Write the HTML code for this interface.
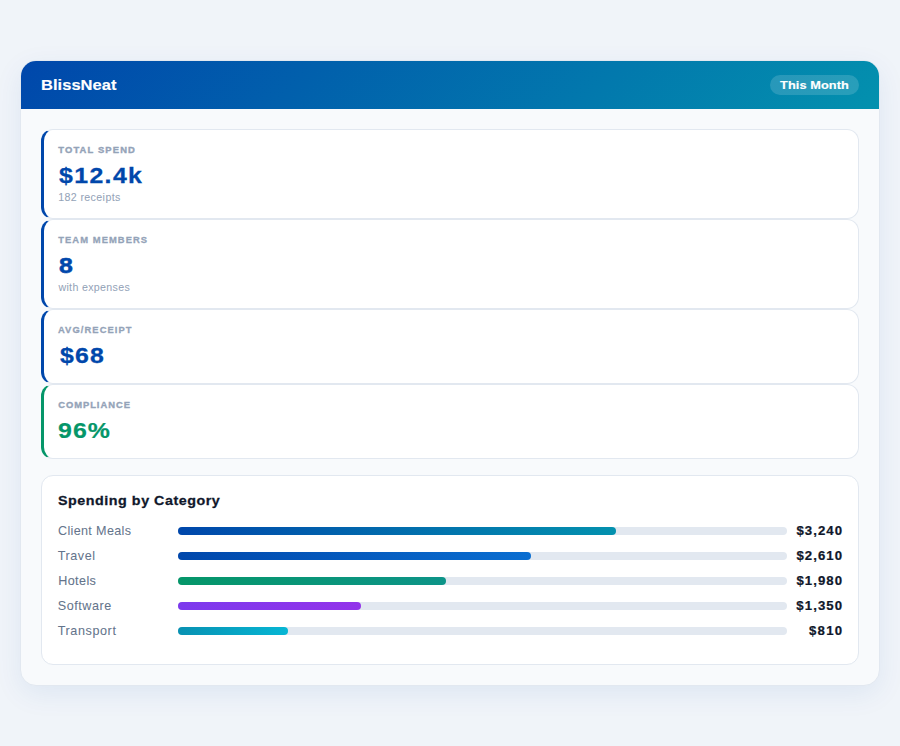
<!DOCTYPE html>
<html lang="en">
<head>
<meta charset="utf-8">
<title>BlissNeat</title>
<style>
html,body{margin:0;padding:0}
body{width:900px;height:746px;position:relative;overflow:hidden;background:#f0f4f9;font-family:"Liberation Sans",sans-serif;}
.card{position:absolute;left:20px;top:60px;width:860px;height:626px;box-sizing:border-box;border:1px solid #e2e8f0;background:#f8fafc;border-radius:16px;box-shadow:0 8px 28px rgba(0,71,171,.08);overflow:hidden}
.header{position:absolute;left:0;top:0;width:858px;height:48px;background:linear-gradient(135deg,#0047ab 0%,#0391ae 100%)}
.pill{position:absolute;left:770px;top:75px;width:89px;height:20px;border-radius:10px;background:rgba(255,255,255,.15)}
.stat{position:absolute;left:41px;width:818px;box-sizing:border-box;background:#fff;border:1px solid #e2e8f0;border-left:3px solid #0047ab;border-radius:12px}
.chart{position:absolute;left:41px;top:475px;width:818px;height:190px;box-sizing:border-box;background:#fff;border:1px solid #e2e8f0;border-radius:12px}
.track{position:absolute;left:178px;width:609px;height:8px;border-radius:4px;background:#e2e8f0}
.fill{position:absolute;left:0;top:0;height:8px;border-radius:4px}
.t{position:absolute;white-space:nowrap;line-height:1;transform-origin:0 50%;display:block}
</style>
</head>
<body>
<div class="card"><div class="header"></div></div>
<div class="pill"></div>
<div class="stat" style="top:129px;height:90px;border-left-color:#0047ab"></div>
<div class="stat" style="top:219px;height:90px;border-left-color:#0047ab"></div>
<div class="stat" style="top:309px;height:75px;border-left-color:#0047ab"></div>
<div class="stat" style="top:384px;height:75px;border-left-color:#059669"></div>
<div class="chart"></div>
<div class="track" style="top:527px"><div class="fill" style="width:72%;background:linear-gradient(90deg,#0047ab,#0391ae)"></div></div>
<div class="track" style="top:552px"><div class="fill" style="width:58%;background:linear-gradient(90deg,#0047ab,#0a6ed1)"></div></div>
<div class="track" style="top:577px"><div class="fill" style="width:44%;background:linear-gradient(90deg,#059669,#0d9488)"></div></div>
<div class="track" style="top:602px"><div class="fill" style="width:30%;background:linear-gradient(90deg,#7c3aed,#9333ea)"></div></div>
<div class="track" style="top:627px"><div class="fill" style="width:18%;background:linear-gradient(90deg,#0891b2,#06b6d4)"></div></div>
<div class="t" id="brand" style="left:41.3px;top:77.0px;font-size:15.0px;font-weight:700;color:#ffffff;letter-spacing:0.03px;-webkit-text-stroke:0.14px #ffffff;transform:scaleX(1.100);">BlissNeat</div>
<div class="t" id="pill" style="left:780.18px;top:79.2px;font-size:11.6px;font-weight:700;color:#ffffff;letter-spacing:0.08px;-webkit-text-stroke:0.16px #ffffff;transform:scaleX(1.100);">This Month</div>
<div class="t" id="l1" style="left:58.24px;top:144.8px;font-size:9.4px;font-weight:700;color:#94a3b8;letter-spacing:1.15px;-webkit-text-stroke:0.39px #94a3b8;">TOTAL SPEND</div>
<div class="t" id="v1" style="left:58.78px;top:165.2px;font-size:22.6px;font-weight:700;color:#0047ab;letter-spacing:1.26px;-webkit-text-stroke:0.27px #0047ab;transform:scaleX(1.100);">$12.4k</div>
<div class="t" id="s1" style="left:58.17px;top:191.69px;font-size:10.63px;font-weight:400;color:#94a3b8;letter-spacing:0.39px;-webkit-text-stroke:0.05px #94a3b8;">182 receipts</div>
<div class="t" id="l2" style="left:58.24px;top:234.8px;font-size:9.4px;font-weight:700;color:#94a3b8;letter-spacing:1.07px;-webkit-text-stroke:0.28px #94a3b8;">TEAM MEMBERS</div>
<div class="t" id="v2" style="left:59.17px;top:255.2px;font-size:22.6px;font-weight:700;color:#0047ab;-webkit-text-stroke:0.56px #0047ab;transform:scaleX(1.100);">8</div>
<div class="t" id="s2" style="left:58.38px;top:281.69px;font-size:10.63px;font-weight:400;color:#94a3b8;letter-spacing:0.34px;-webkit-text-stroke:0.03px #94a3b8;">with expenses</div>
<div class="t" id="l3" style="left:57.93px;top:324.8px;font-size:9.4px;font-weight:700;color:#94a3b8;letter-spacing:1.08px;-webkit-text-stroke:0.28px #94a3b8;">AVG/RECEIPT</div>
<div class="t" id="v3" style="left:59.71px;top:345.2px;font-size:22.6px;font-weight:700;color:#0047ab;letter-spacing:1.05px;-webkit-text-stroke:0.29px #0047ab;transform:scaleX(1.100);">$68</div>
<div class="t" id="l4" style="left:58.16px;top:399.8px;font-size:9.4px;font-weight:700;color:#94a3b8;letter-spacing:0.97px;-webkit-text-stroke:0.35px #94a3b8;">COMPLIANCE</div>
<div class="t" id="v4" style="left:58.3px;top:420.2px;font-size:22.6px;font-weight:700;color:#059669;letter-spacing:0.97px;-webkit-text-stroke:0.23px #059669;transform:scaleX(1.100);">96%</div>
<div class="t" id="ct" style="left:58.27px;top:494.0px;font-size:13.0px;font-weight:700;color:#0f172a;letter-spacing:0.48px;-webkit-text-stroke:0.26px #0f172a;transform:scaleX(1.100);">Spending by Category</div>
<div class="t" id="r1" style="left:57.97px;top:524.7px;font-size:12.6px;font-weight:400;color:#64748b;letter-spacing:0.34px;-webkit-text-stroke:0.02px #64748b;">Client Meals</div>
<div class="t" id="r2" style="left:57.65px;top:549.7px;font-size:12.6px;font-weight:400;color:#64748b;letter-spacing:0.58px;-webkit-text-stroke:0.03px #64748b;">Travel</div>
<div class="t" id="r3" style="left:58.23px;top:574.7px;font-size:12.6px;font-weight:400;color:#64748b;letter-spacing:0.39px;-webkit-text-stroke:0.08px #64748b;">Hotels</div>
<div class="t" id="r4" style="left:57.73px;top:599.7px;font-size:12.6px;font-weight:400;color:#64748b;letter-spacing:0.54px;-webkit-text-stroke:0.05px #64748b;">Software</div>
<div class="t" id="r5" style="left:57.67px;top:624.7px;font-size:12.6px;font-weight:400;color:#64748b;letter-spacing:0.6px;-webkit-text-stroke:0.06px #64748b;">Transport</div>
<div class="t" id="a1" style="left:796.38px;top:523.9px;font-size:13.2px;font-weight:700;color:#0f172a;letter-spacing:1.06px;-webkit-text-stroke:0.24px #0f172a;">$3,240</div>
<div class="t" id="a2" style="left:796.38px;top:548.9px;font-size:13.2px;font-weight:700;color:#0f172a;letter-spacing:1.06px;-webkit-text-stroke:0.24px #0f172a;">$2,610</div>
<div class="t" id="a3" style="left:796.38px;top:573.9px;font-size:13.2px;font-weight:700;color:#0f172a;letter-spacing:1.06px;-webkit-text-stroke:0.23px #0f172a;">$1,980</div>
<div class="t" id="a4" style="left:796.37px;top:598.9px;font-size:13.2px;font-weight:700;color:#0f172a;letter-spacing:1.07px;-webkit-text-stroke:0.23px #0f172a;">$1,350</div>
<div class="t" id="a5" style="left:809.02px;top:623.9px;font-size:13.2px;font-weight:700;color:#0f172a;letter-spacing:1.23px;-webkit-text-stroke:0.23px #0f172a;">$810</div>
</body>
</html>
